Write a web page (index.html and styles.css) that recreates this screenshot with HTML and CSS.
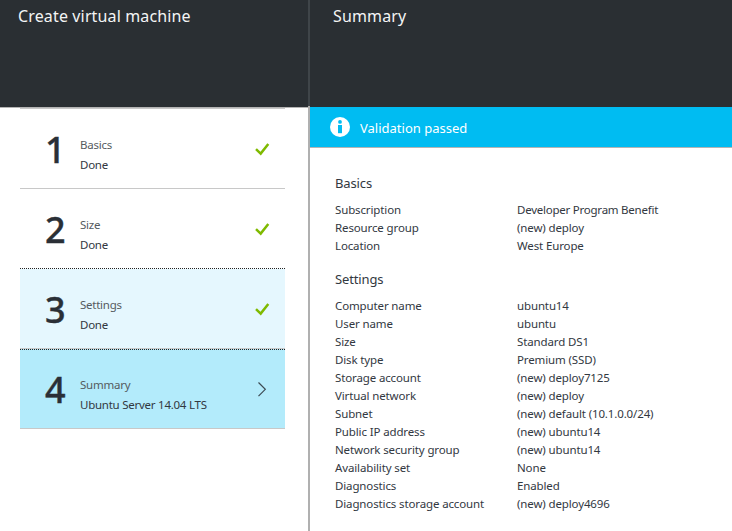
FILE: index.html
```html
<!DOCTYPE html>
<html lang="en">
<head>
<meta charset="utf-8">
<title>Create virtual machine</title>
<link rel="stylesheet" href="styles.css">
</head>
<body>
<div class="portal">
  <section class="blade blade-steps">
    <header class="blade-header"><h1>Create virtual machine</h1></header>
    <ol class="steps">
      <li class="step">
        <span class="step-number">1</span>
        <div class="step-text"><div class="step-title">Basics</div><div>Done</div></div>
        <svg class="step-icon check" viewBox="0 0 16 16"><path d="M2 8.1 6.7 12.6 14.3 3"/></svg>
      </li>
      <li class="step">
        <span class="step-number">2</span>
        <div class="step-text"><div class="step-title">Size</div><div>Done</div></div>
        <svg class="step-icon check" viewBox="0 0 16 16"><path d="M2 8.1 6.7 12.6 14.3 3"/></svg>
      </li>
      <li class="step hovered">
        <span class="step-number">3</span>
        <div class="step-text"><div class="step-title">Settings</div><div>Done</div></div>
        <svg class="step-icon check" viewBox="0 0 16 16"><path d="M2 8.1 6.7 12.6 14.3 3"/></svg>
      </li>
      <li class="step selected">
        <span class="step-number">4</span>
        <div class="step-text"><div class="step-title">Summary</div><div class="image-name">Ubuntu Server 14.04 LTS</div></div>
        <svg class="step-icon chevron" viewBox="0 0 16 16"><path d="M4.5 1.5 11.3 8.3 4.5 15.1"/></svg>
      </li>
    </ol>
  </section>
  <section class="blade blade-summary">
    <header class="blade-header"><h1>Summary</h1></header>
    <div class="banner">
      <svg class="info" viewBox="0 0 20 20"><circle cx="10" cy="10" r="10" fill="#fff"/><circle cx="10" cy="4.9" r="1.9" fill="#00bcf2"/><path d="M8 8H12v8.2H8z" fill="#00bcf2"/></svg>
      <span>Validation passed</span>
    </div>
    <div class="details">
      <h2>Basics</h2>
      <dl>
        <dt>Subscription</dt><dd class="subscription-name">Developer Program Benefit</dd>
        <dt>Resource group</dt><dd>(new) deploy</dd>
        <dt>Location</dt><dd>West Europe</dd>
      </dl>
      <h2>Settings</h2>
      <dl>
        <dt>Computer name</dt><dd>ubuntu14</dd>
        <dt>User name</dt><dd>ubuntu</dd>
        <dt>Size</dt><dd>Standard DS1</dd>
        <dt>Disk type</dt><dd>Premium (SSD)</dd>
        <dt>Storage account</dt><dd>(new) deploy7125</dd>
        <dt>Virtual network</dt><dd>(new) deploy</dd>
        <dt>Subnet</dt><dd>(new) default (10.1.0.0/24)</dd>
        <dt>Public IP address</dt><dd>(new) ubuntu14</dd>
        <dt>Network security group</dt><dd>(new) ubuntu14</dd>
        <dt>Availability set</dt><dd>None</dd>
        <dt>Diagnostics</dt><dd>Enabled</dd>
        <dt>Diagnostics storage account</dt><dd>(new) deploy4696</dd>
      </dl>
    </div>
  </section>
</div>
</body>
</html>
```
FILE: styles.css
```css
* { box-sizing: border-box; }
body {
  margin: 0;
  background: #fff;
  color: #32383f;
  font: 11.5px/18px "Noto Sans", "Open Sans", sans-serif;
  letter-spacing: -0.13px;
}
h1, h2, dl, dd, ol { margin: 0; padding: 0; font-weight: 400; }
.portal {
  display: grid;
  grid-template-columns: 310px 1fr;
  height: 531px;
  overflow: hidden;
}
.blade-steps {
  border-right: 2px solid;
  border-image: linear-gradient(#3f4549 107px, #b0b0b0 107px) 1;
  border-width: 0 2px 0 0;
}
.blade-header {
  height: 107px;
  padding: 4px 18px;
  background: #2a2f33;
  color: #f4f5f5;
}
.blade-summary .blade-header { padding-left: 23px; }
h1 {
  font-size: 16px;
  line-height: 24px;
  letter-spacing: 0.14px;
}
.steps {
  list-style: none;
  border-top: 1px solid #b4b4b4;
  padding: 0 23px 0 20px;
}
.step {
  display: flex;
  height: 80px;
  border-bottom: 1px solid #c8c8c8;
}
.step:first-child { height: 81px; border-top: 1px solid #c8c8c8; }
.step:nth-child(2) { border-bottom: 1px dotted #222; }
.step-number {
  width: 60px;
  padding-left: 25px;
  font-size: 36px;
  font-weight: 500;
  line-height: 82px;
  letter-spacing: 0;
  color: #2a2f36;
  -webkit-text-stroke: 0.4px #2a2f36;
}
.step-text { flex: 1; padding-top: 26px; line-height: 20px; letter-spacing: -0.25px; }
.step-title { color: #555b60; }
.step-icon { width: 16px; height: 16px; margin: 32px 15px 0 0; fill: none; }
.check { stroke: #7fba00; stroke-width: 2.5; }
.chevron { stroke: #3c4a52; stroke-width: 1.2; }
.hovered { background: #e5f7fe; }
.selected { background: #b3ebfb; border-top: 1px dotted #222; }
.selected .step-number { line-height: 80px; }
.selected .step-text { padding-top: 25px; }
.selected .step-icon { margin-top: 31px; }
.banner {
  display: flex;
  align-items: center;
  gap: 10px;
  height: 41px;
  padding-left: 20px;
  border-bottom: 1px solid #b4b4b4;
  background: #00bcf2;
  color: #fff;
  font-size: 13px;
  letter-spacing: 0;
}
.banner span { padding-top: 2px; }
.info { width: 20px; height: 20px; }
.details { padding: 25px 0 0 25px; }
h2 { font-size: 13px; line-height: 20px; margin-bottom: 8px; }
dl { display: grid; grid-template-columns: 182px 1fr; margin-bottom: 14px; }
.subscription-name { letter-spacing: -0.24px; }
```
